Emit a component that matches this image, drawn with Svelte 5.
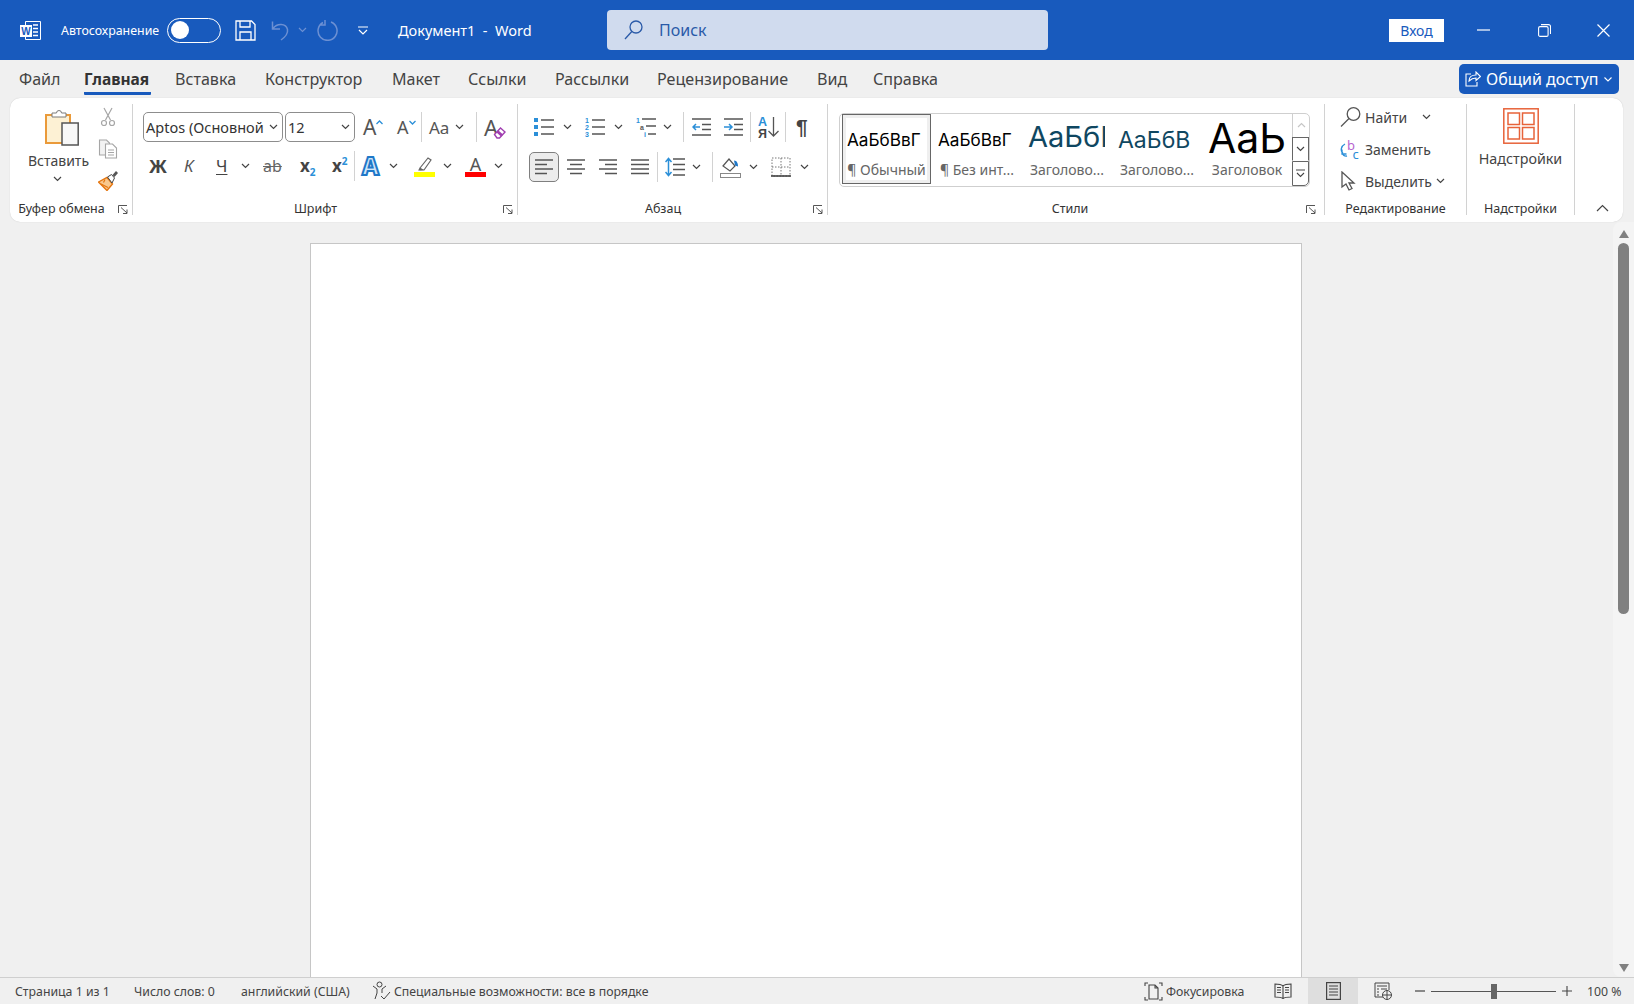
<script>
	const tabs = ['Файл', 'Главная', 'Вставка', 'Конструктор', 'Макет', 'Ссылки', 'Рассылки', 'Рецензирование', 'Вид', 'Справка'];

	const styles = [
		{ sample: 'АаБбВвГ', name: '¶ Обычный', cls: 'normal', selected: true },
		{ sample: 'АаБбВвГ', name: '¶ Без инт...', cls: 'normal' },
		{ sample: 'АаБбВ', name: 'Заголово...', cls: 'h1' },
		{ sample: 'АаБбВ', name: 'Заголово...', cls: 'h2' },
		{ sample: 'АаЬ', name: 'Заголовок', cls: 'title' }
	];
</script>

{#snippet chev()}
	<svg class="chev" width="9" height="6" viewBox="0 0 9 6"><path d="M1 1l3.5 3.5L8 1" fill="none" stroke="#444" stroke-width="1.2" /></svg>
{/snippet}

{#snippet launcher()}
	<svg class="launcher" width="10" height="9" viewBox="0 0 10 9"><path d="M.5 8V.5H9M3 2.5L9 8M9 4.5V8.5H5" fill="none" stroke="#555" /></svg>
{/snippet}

{#snippet sep()}
	<i class="sep"></i>
{/snippet}

<div class="word">
	<header class="titlebar">
		<svg width="21" height="21" viewBox="0 0 21 21">
			<path d="M5.5 1.500h15v18h-15z" fill="none" stroke="#fff" />
			<path d="M13 5h5M13 8.500h5M13 12h5M13 15.500h5" stroke="#fff" stroke-width="1.300" />
			<rect y="5" width="12" height="12" fill="#fff" />
			<text x="6" y="14.500" class="wmark">W</text>
		</svg>
		<span class="autosave">Автосохранение</span>
		<span class="toggle"><i></i></span>
		<svg width="21" height="21" viewBox="0 0 21 21" fill="none" stroke="#fff" stroke-width="1.300">
			<path d="M1 1h15.500L20 4.500V20H1z" /><path d="M5 1v6h10V1M5 20v-8h11v8" />
		</svg>
		<svg width="20" height="21" viewBox="0 0 20 21" fill="none" stroke="#6c90d3" stroke-width="1.500">
			<path d="M1.500 1.500V9H9M2 8.500C6 3 15 3 16.500 9.500c.8 4.500-3 8-6.500 10.500" />
		</svg>
		<svg width="9" height="6" viewBox="0 0 9 6"><path d="M1 1l3.500 3.500L8 1" fill="none" stroke="#6c90d3" stroke-width="1.200" /></svg>
		<svg width="22" height="22" viewBox="0 0 22 22" fill="none" stroke="#6c90d3" stroke-width="1.500">
			<path d="M6 3.500a9.500 9.500 0 1 0 8-.5M8 1v5H2.500" />
		</svg>
		<svg width="10" height="9" viewBox="0 0 10 9" fill="none" stroke="#fff" stroke-width="1.200"><path d="M0 1h10M1 4l4 4 4-4" /></svg>
		<span class="doc-title">Документ1&nbsp; - &nbsp;Word</span>
		<div class="search">
			<svg width="19" height="20" viewBox="0 0 19 20" fill="none" stroke="#2a5aa8" stroke-width="1.300">
				<circle cx="12" cy="7" r="6" /><path d="M7.800 11.500L1 19" />
			</svg>
			<span>Поиск</span>
		</div>
		<button class="login">Вход</button>
		<svg width="13" height="2" viewBox="0 0 13 2"><path d="M0 1h13" stroke="#fff" stroke-width="1.200" /></svg>
		<svg width="13" height="13" viewBox="0 0 13 13" fill="none" stroke="#fff" stroke-width="1.100">
			<rect x=".6" y="2.600" width="9.500" height="9.800" rx="1.500" /><path d="M3 .6h7.500a2 2 0 0 1 2 2V10" />
		</svg>
		<svg width="13" height="13" viewBox="0 0 13 13"><path d="M.5.5l12 12M12.500.5l-12 12" stroke="#fff" stroke-width="1.200" /></svg>
	</header>

	<nav class="tabs">
		<div class="tab-list">
			{#each tabs as tab, i}
				<span class="tab" class:active={i === 1}>{tab}</span>
			{/each}
		</div>
		<button class="share">
			<svg width="16" height="16" viewBox="0 0 16 16" fill="none" stroke="#fff" stroke-width="1.100">
				<path d="M6 3H1v12h11v-4M4 10c0-4 3-6 7-6V1l4.500 4.500L11 9.500V7c-3 0-5 1-7 3z" />
			</svg>
			<span>Общий доступ</span>
			<svg width="8" height="5" viewBox="0 0 8 5"><path d="M.5.500L4 4 7.500.5" fill="none" stroke="#fff" stroke-width="1.100" /></svg>
		</button>
	</nav>

	<section class="ribbon">
		<div class="group clipboard">
			<div class="body">
				<div class="paste">
					<svg width="34" height="38" viewBox="0 0 34 38">
						<rect x="1" y="7" width="24" height="28" fill="#fdf1d4" stroke="#ea9a3a" stroke-width="2" />
						<path d="M7 9V5h4.500a2.500 2.500 0 0 1 5 0H21v4z" fill="#fff" stroke="#7b7b7b" />
						<rect x="17" y="15" width="16.200" height="22" fill="#f8f8f8" stroke="#555" stroke-width="1.500" />
					</svg>
					<span>Вставить</span>
					{@render chev()}
				</div>
				<div class="clip-tools">
					<svg width="20" height="20" viewBox="0 0 20 20" fill="none" stroke="#a6a6a6" stroke-width="1.200">
						<path d="M6 1l6.500 12M14 1L7.500 13" /><circle cx="6" cy="16" r="2.500" /><circle cx="14" cy="16" r="2.500" />
					</svg>
					<svg width="20" height="20" viewBox="0 0 20 20" stroke="#a6a6a6" stroke-width="1.100">
						<path d="M1.500 1h7l3 3v12h-10z" fill="#f2f2f2" /><path d="M7.500 5h7l4 4v10h-11z" fill="#fff" /><path d="M10 11h6M10 13.500h6M10 16h6" />
					</svg>
					<svg width="20" height="20" viewBox="0 0 20 20">
						<path d="M.5 11L9 6.500l5.500 6.500L9 19.500z" fill="#f8c88e" stroke="#e5750f" stroke-width="1.400" />
						<path d="M3 13l7 3.500M7 8.500l-1.500 3" stroke="#e5750f" stroke-width="1.200" />
						<path d="M9.500 6l4-2.500 3 3.500-2.500 5z" fill="#fff" stroke="#444" />
						<path d="M14.500 4l3.500-4 2 2-3.500 4z" fill="#555" />
					</svg>
				</div>
			</div>
			<div class="label"><span>Буфер обмена</span>{@render launcher()}</div>
		</div>

		<div class="group font">
			<div class="body">
				<div class="row font-a">
					<div class="combo name"><span>Aptos (Основной</span>{@render chev()}</div>
					<div class="combo size"><span>12</span>{@render chev()}</div>
					<div class="big-a">A<svg width="7" height="5" viewBox="0 0 7 5"><path d="M.5 4L3.500 1l3 3" fill="none" stroke="#2b8fd8" stroke-width="1.300" /></svg></div>
					<div class="big-a small">A<svg width="7" height="5" viewBox="0 0 7 5"><path d="M.5 1l3 3 3-3" fill="none" stroke="#2b8fd8" stroke-width="1.300" /></svg></div>
					{@render sep()}
					<div class="aa"><span>Aa</span>{@render chev()}</div>
					{@render sep()}
					<div class="clear">
						<span>A</span>
						<svg width="13" height="13" viewBox="0 0 13 13">
							<path d="M1.500 8.500l6-6.500 4.500 4-5.500 6H4z" fill="#fff" stroke="#a03fb0" stroke-width="1.400" />
							<path d="M4.500 5.500l4.500 4" stroke="#a03fb0" stroke-width="3" />
						</svg>
					</div>
				</div>
				<div class="row font-b">
					<b class="fmt bold">Ж</b>
					<i class="fmt italic">К</i>
					<span class="fmt under">Ч</span>
					{@render chev()}
					<span class="fmt strike">ab</span>
					<b class="fmt script">x<sub>2</sub></b>
					<b class="fmt script">x<sup>2</sup></b>
					{@render sep()}
					<span class="effect">A</span>
					{@render chev()}
					<svg width="21" height="22" viewBox="0 0 21 22">
						<path d="M6 13l8-10 3 2-7 10H6z" fill="#fff" stroke="#666" stroke-width="1.200" />
						<path d="M4 15.500l2-3 4 2.500z" fill="#666" />
						<rect y="17" width="21" height="5" fill="#ffff00" />
					</svg>
					{@render chev()}
					<span class="color-a">A</span>
					{@render chev()}
				</div>
			</div>
			<div class="label"><span>Шрифт</span>{@render launcher()}</div>
		</div>

		<div class="group para">
			<div class="body">
				<div class="row para-a">
					<svg width="20" height="20" viewBox="0 0 20 20">
						<path d="M0 1h4v4H0zM0 8h4v4H0zM0 15h4v4H0z" fill="#2b8fd8" />
						<path d="M7 3h13M7 10h13M7 17h13" stroke="#555" stroke-width="1.300" />
					</svg>
					{@render chev()}
					<svg width="20" height="20" viewBox="0 0 20 20">
						<text x="0" y="6" class="mini">1</text><text x="0" y="13" class="mini">2</text><text x="0" y="20" class="mini">3</text>
						<path d="M7 3h13M7 10h13M7 17h13" stroke="#555" stroke-width="1.300" />
					</svg>
					{@render chev()}
					<svg width="20" height="20" viewBox="0 0 20 20">
						<text x="0" y="6" class="mini">1</text><text x="4" y="13" class="mini dark">a</text><text x="8" y="20" class="mini">i</text>
						<path d="M6 2h14M10 9h10M12 17h8" stroke="#555" stroke-width="1.300" />
					</svg>
					{@render chev()}
					{@render sep()}
					<svg width="19" height="20" viewBox="0 0 19 20">
						<path d="M0 2h19M0 18h19M10 7.500h9M10 12.500h9" stroke="#555" stroke-width="1.300" />
						<path d="M8 10H1M4 7l-3 3 3 3" fill="none" stroke="#2b8fd8" stroke-width="1.500" />
					</svg>
					<svg width="19" height="20" viewBox="0 0 19 20">
						<path d="M0 2h19M0 18h19M10 7.500h9M10 12.500h9" stroke="#555" stroke-width="1.300" />
						<path d="M0 10h7M5 7l3 3-3 3" fill="none" stroke="#2b8fd8" stroke-width="1.500" />
					</svg>
					{@render sep()}
					<svg width="21" height="24" viewBox="0 0 21 24">
						<text x="0" y="11" class="sort blue">A</text>
						<text x="0" y="22.500" class="sort">Я</text>
						<path d="M15.500 2v19M10.500 16l5 5 5-5" fill="none" stroke="#555" stroke-width="1.300" />
					</svg>
					{@render sep()}
					<span class="pilcrow">¶</span>
				</div>
				<div class="row para-b">
					<div class="align-on">
						<svg width="18" height="16" viewBox="0 0 18 16"><path d="M0 1h18M0 5.500h12M0 10h18M0 14.500h12" stroke="#555" stroke-width="1.300" /></svg>
					</div>
					<svg width="18" height="16" viewBox="0 0 18 16"><path d="M0 1h18M3 5.500h12M0 10h18M3 14.500h12" stroke="#555" stroke-width="1.300" /></svg>
					<svg width="18" height="16" viewBox="0 0 18 16"><path d="M0 1h18M6 5.500h12M0 10h18M6 14.500h12" stroke="#555" stroke-width="1.300" /></svg>
					<svg width="18" height="16" viewBox="0 0 18 16"><path d="M0 1h18M0 5.500h18M0 10h18M0 14.500h18" stroke="#555" stroke-width="1.300" /></svg>
					{@render sep()}
					<svg width="20" height="20" viewBox="0 0 20 20">
						<path d="M8 2h12M8 7.500h12M8 12.500h12M8 18h12" stroke="#555" stroke-width="1.300" />
						<path d="M3.500 2v16M.5 5l3-3.500L6.500 5M.5 15l3 3.500L6.500 15" fill="none" stroke="#2b8fd8" stroke-width="1.500" />
					</svg>
					{@render chev()}
					{@render sep()}
					<svg width="21" height="21" viewBox="0 0 21 21">
						<path d="M3 9l6-7 6 7-5 5z" fill="#fff" stroke="#555" stroke-width="1.200" />
						<path d="M14 3.500c3 0 4 3 4 6l-3-1z" fill="#1f78c8" />
						<rect x=".5" y="16.500" width="20" height="4" fill="#fff" stroke="#888" />
					</svg>
					{@render chev()}
					<svg width="20" height="20" viewBox="0 0 20 20">
						<path d="M1 1h18v18H1zM10 1v18M1 10h18" fill="none" stroke="#777" stroke-dasharray="1.500 1.500" />
						<path d="M0 19h20" stroke="#444" stroke-width="1.600" />
					</svg>
					{@render chev()}
				</div>
			</div>
			<div class="label"><span>Абзац</span>{@render launcher()}</div>
		</div>

		<div class="group styles">
			<div class="body">
				<div class="gallery">
					{#each styles as s}
						<div class="style" class:selected={s.selected}>
							<div class="sample {s.cls}">{s.sample}</div>
							<div class="style-name">{s.name}</div>
						</div>
					{/each}
					<div class="scroller">
						<div class="up"><svg width="9" height="6" viewBox="0 0 9 6"><path d="M1 5l3.500-3.500L8 5" fill="none" stroke="#c6c6c6" stroke-width="1.200" /></svg></div>
						<div class="mid">{@render chev()}</div>
						<div class="more">
							<svg width="9" height="9" viewBox="0 0 9 9" fill="none" stroke="#444" stroke-width="1.100"><path d="M0 1h9M1 4l3.500 3.500L8 4" /></svg>
						</div>
					</div>
				</div>
			</div>
			<div class="label"><span>Стили</span>{@render launcher()}</div>
		</div>

		<div class="group edit">
			<div class="body">
				<div class="edit-row">
					<svg width="21" height="20" viewBox="0 0 21 20" fill="none" stroke="#555" stroke-width="1.300">
						<circle cx="13.500" cy="7" r="6.300" /><path d="M9 11.500L1 19.500" />
					</svg>
					<span class="find">Найти</span>
					{@render chev()}
				</div>
				<div class="edit-row">
					<svg width="21" height="21" viewBox="0 0 21 21">
						<text x="7" y="10.500" class="repl b">b</text>
						<text x="12.500" y="20" class="repl c">c</text>
						<path d="M5 5C1 7 0 12 3 14M7 17c-2 .5-4-1-5-3M2 10.500V15h4.500" fill="none" stroke="#2b8fd8" stroke-width="1.300" />
					</svg>
					<span>Заменить</span>
				</div>
				<div class="edit-row">
					<svg width="21" height="20" viewBox="0 0 21 20">
						<path d="M2 1v15l4-3 3 6 3-1.500-3-5.500h5z" fill="#fff" stroke="#555" stroke-width="1.300" />
					</svg>
					<span class="select">Выделить</span>
					{@render chev()}
				</div>
			</div>
			<div class="label"><span>Редактирование</span></div>
		</div>

		<div class="group addins">
			<div class="body">
				<svg width="36" height="36" viewBox="0 0 36 36" fill="none" stroke="#e7633a" stroke-width="1.500">
					<rect x=".8" y=".8" width="34.400" height="34.400" />
					<rect x="5" y="5" width="11.500" height="11.500" /><rect x="19.500" y="5" width="11.500" height="11.500" />
					<rect x="5" y="19.500" width="11.500" height="11.500" /><rect x="19.500" y="19.500" width="11.500" height="11.500" />
				</svg>
				<span>Надстройки</span>
			</div>
			<div class="label"><span>Надстройки</span></div>
		</div>

		<div class="group collapse">
			<svg width="13" height="8" viewBox="0 0 13 8"><path d="M1 7l5.500-5.500L12 7" fill="none" stroke="#444" stroke-width="1.200" /></svg>
		</div>
	</section>

	<main class="workspace">
		<div class="canvas"><div class="page"></div></div>
		<div class="scrollbar">
			<i class="arrow up"></i>
			<div class="thumb"></div>
			<i class="arrow down"></i>
		</div>
	</main>

	<footer class="status">
		<span>Страница 1 из 1</span>
		<span>Число слов: 0</span>
		<span>английский (США)</span>
		<span class="with-icon">
			<svg width="19" height="20" viewBox="0 0 19 20" fill="none" stroke="#444" stroke-width="1">
				<circle cx="7.500" cy="3.500" r="2.500" /><path d="M1 5l4 3v4l-2 6M14 5l-4 3v4M9 15l3 3 6-7" />
			</svg>
			Специальные возможности: все в порядке
		</span>
		<span class="with-icon">
			<svg width="19" height="19" viewBox="0 0 19 19" fill="none" stroke="#444" stroke-width="1.100">
				<path d="M1 4V1h3M15 1h3v3M1 15v3h3M15 18h3v-3" /><path d="M5 3h6l3 3v11H5zM11 3v3h3" />
			</svg>
			Фокусировка
		</span>
		<svg width="18" height="16" viewBox="0 0 18 16" fill="none" stroke="#444" stroke-width="1.100">
			<path d="M9 3C7 1 4 1 1 1v13c3 0 6 0 8 1.500 2-1.500 5-1.500 8-1.500V1c-3 0-6 0-8 2zM9 3v12.500M3 4.500h4M3 7h4M3 9.500h4M11 4.500h4M11 7h4M11 9.500h4" />
		</svg>
		<div class="view-on">
			<svg width="15" height="18" viewBox="0 0 15 18" fill="none" stroke="#444" stroke-width="1.200">
				<rect x=".6" y=".6" width="13.800" height="16.800" /><path d="M3 4h9M3 7h9M3 10h9M3 13h9" />
			</svg>
		</div>
		<svg width="18" height="18" viewBox="0 0 18 18" fill="none" stroke="#444" stroke-width="1">
			<path d="M9 15H1V1h14v7M3 4h10M3 7h2M7 7h6M3 10h2M3 13h2" />
			<circle cx="13" cy="13" r="4.500" fill="#f0f0f0" /><path d="M8.500 13h9M13 8.500v9" />
		</svg>
		<svg width="10" height="2" viewBox="0 0 10 2"><path d="M0 1h10" stroke="#444" stroke-width="1.200" /></svg>
		<div class="slider"><i></i></div>
		<svg width="10" height="10" viewBox="0 0 10 10"><path d="M0 5h10M5 0v10" stroke="#444" stroke-width="1.100" /></svg>
		<span>100 %</span>
	</footer>
</div>

<style>
	:global(body) {
		margin: 0;
		background: #f0f0f0;
	}

	.word {
		width: 1634px;
		height: 1004px;
		display: flex;
		flex-direction: column;
		overflow: hidden;
		font-family: "Noto Sans", sans-serif;
		color: #444;
		background: #f0f0f0;
	}

	.titlebar {
		flex: 0 0 60px;
		display: grid;
		grid-template-columns: 41px 106px 68px 36px 27px 19px 41px 40px 209px 782px 88px 61px 59px auto;
		align-items: center;
		padding-left: 20px;
		background: #185abd;
		color: #fff;
	}

	.wmark {
		font: 700 10px "Liberation Sans", sans-serif;
		fill: #185abd;
		text-anchor: middle;
	}

	.autosave {
		font-size: 12.400px;
	}

	.toggle {
		width: 54px;
		height: 25px;
		box-sizing: border-box;
		border: 1.5px solid #fff;
		border-radius: 13px;
		display: flex;
		align-items: center;
		padding-left: 3px;
	}

	.toggle i {
		width: 18px;
		height: 18px;
		border-radius: 50%;
		background: #fff;
	}

	.doc-title {
		font-size: 14.500px;
	}

	.search {
		width: 441px;
		height: 40px;
		display: flex;
		align-items: center;
		gap: 16px;
		padding-left: 17px;
		box-sizing: border-box;
		border-radius: 4px;
		background: #d0dbee;
		color: #2a5aa8;
		font-size: 16px;
	}

	.login {
		width: 55px;
		height: 23px;
		padding: 0;
		border: none;
		background: #fff;
		color: #185abd;
		font: 14px "Noto Sans", sans-serif;
	}

	.tabs {
		flex: 0 0 38px;
		display: flex;
		justify-content: space-between;
	}

	.tab-list {
		display: grid;
		grid-template-columns: 65px 91px 90px 127px 76px 87px 102px 160px 56px auto;
		padding-left: 19px;
		font-size: 16.100px;
		line-height: 39px;
		color: #444;
	}

	.tab {
		height: 35px;
		white-space: nowrap;
	}

	.tab.active {
		font-size: 15.500px;
		font-weight: 700;
		color: #333;
		width: 67px;
		border-bottom: 3px solid #185abd;
		box-sizing: content-box;
		height: 32px;
		border-radius: 0 0 1px 1px;
	}

	.share {
		width: 160px;
		height: 30px;
		margin: 4px 15px 0 0;
		padding: 0 0 0 6px;
		display: flex;
		align-items: center;
		gap: 5px;
		border: none;
		border-radius: 5px;
		background: #185abd;
		color: #fff;
		font: 16px "Noto Sans", sans-serif;
	}

	.ribbon {
		flex: 0 0 124px;
		margin: 0 11px 0 10px;
		box-sizing: border-box;
		display: flex;
		border-radius: 10px;
		background: #fff;
		box-shadow: 0 0 1px #bdbdbd;
	}

	.group {
		margin-top: 6px;
		height: 111px;
		box-sizing: border-box;
		display: flex;
		flex-direction: column;
		border-right: 1px solid #d2d2d2;
		flex: none;
	}

	.body {
		flex: 1;
		min-height: 0;
	}

	.label {
		flex: 0 0 22px;
		box-sizing: border-box;
		padding: 10px 4px 0 0;
		display: flex;
		align-items: center;
		font-size: 12.500px;
		line-height: 12px;
		color: #333;
	}

	.label span {
		flex: 1;
		text-align: center;
		padding-right: 5px;
	}

	.launcher {
		flex: none;
	}

	.sep {
		display: block;
		width: 1px;
		height: 30px;
		background: #d2d2d2;
	}

	.row {
		display: grid;
		align-items: center;
		justify-items: start;
		height: 30px;
	}

	.clipboard {
		width: 123px;
	}

	.clipboard .body {
		display: flex;
	}

	.paste {
		width: 82px;
		padding-left: 15px;
		box-sizing: border-box;
		display: flex;
		flex-direction: column;
		align-items: center;
		padding-top: 4px;
		font-size: 14px;
	}

	.paste svg:first-child {
		margin-left: 6px;
	}

	.paste span {
		margin-top: 5px;
		line-height: 20px;
	}

	.paste .chev {
		margin: 5px 0 0 -2px;
	}

	.clip-tools {
		display: flex;
		flex-direction: column;
		gap: 12px;
		padding: 3px 0 0 6px;
	}

	.font {
		width: 385px;
		padding-top: 8px;
	}

	.font-a {
		grid-template-columns: 142px 78px 34px 24px 8px 47px 8px auto;
		padding-left: 10px;
	}

	.font-b {
		grid-template-columns: 35px 32px 25px 22px 37px 32px 22px 8px 27px 25px 29px 22px 29px auto;
		padding-left: 16px;
		margin-top: 9px;
	}

	.combo {
		height: 30px;
		box-sizing: border-box;
		display: flex;
		align-items: center;
		justify-content: space-between;
		padding: 0 4px 0 2px;
		border: 1px solid #8d8d8d;
		border-radius: 5px;
		font-size: 14.500px;
		color: #333;
		white-space: nowrap;
	}

	.combo.name {
		width: 140px;
	}

	.combo.size {
		width: 70px;
	}

	.big-a {
		display: flex;
		align-items: flex-start;
		font: 21px/26px "Noto Sans", sans-serif;
		color: #555;
	}

	.big-a svg {
		margin-top: 6px;
	}

	.big-a.small {
		font-size: 18px;
	}

	.aa {
		display: flex;
		align-items: center;
		gap: 6px;
		font-size: 17px;
		color: #555;
	}

	.clear {
		display: flex;
		align-items: flex-end;
		font-size: 22px;
		line-height: 26px;
		color: #555;
	}

	.clear svg {
		margin: 0 0 1px -5px;
	}

	.fmt {
		font-size: 18px;
		line-height: 22px;
		color: #444;
	}

	.italic {
		font-size: 17px;
		font-style: italic;
		color: #555;
	}

	.under {
		font-size: 17px;
		text-decoration: underline;
		text-underline-offset: 2px;
	}

	.strike {
		font-size: 16px;
		color: #666;
		text-decoration: line-through;
	}

	.script {
		font-size: 17px;
	}

	.script sub,
	.script sup {
		font-size: 10px;
		line-height: 0;
		color: #2b8fd8;
	}

	.effect {
		font-size: 24px;
		font-weight: 800;
		line-height: 26px;
		color: #cfe6f8;
		-webkit-text-stroke: 2px #1f78c8;
	}

	.color-a {
		width: 21px;
		height: 22px;
		box-sizing: border-box;
		border-bottom: 5px solid #f00;
		text-align: center;
		font-size: 18px;
		line-height: 19px;
		color: #555;
	}

	.para {
		width: 310px;
		padding-top: 8px;
	}

	.para-a {
		grid-template-columns: 29px 22px 29px 22px 27px 20px 9px 32px 26px 8px 27px 11px auto;
		padding-left: 16px;
	}

	.para-b {
		grid-template-columns: 38px 32px 32px 26px 8px 27px 20px 8px 29px 22px 29px auto;
		padding-left: 11px;
		margin-top: 10px;
	}

	.mini {
		font: 700 7px "Liberation Sans", sans-serif;
		fill: #2b8fd8;
	}

	.mini.dark {
		fill: #555;
	}

	.sort {
		font: 700 12.500px "Liberation Sans", sans-serif;
		fill: #444;
	}

	.sort.blue {
		fill: #2b8fd8;
	}

	.pilcrow {
		font: 700 21px/24px "Liberation Sans", sans-serif;
		color: #444;
	}

	.align-on {
		width: 30px;
		height: 30px;
		box-sizing: border-box;
		display: flex;
		align-items: center;
		justify-content: center;
		border: 1px solid #7f7f7f;
		border-radius: 5px;
		background: #ececec;
	}

	.styles {
		width: 497px;
		padding: 9px 4px 0 11px;
	}

	.gallery {
		width: 471px;
		height: 74px;
		box-sizing: border-box;
		display: flex;
		border: 1px solid #cfcfcf;
		border-radius: 5px;
		padding-left: 2px;
	}

	.style {
		width: 90px;
		height: 70px;
		box-sizing: border-box;
		padding: 2px 4px;
		border: 2px solid transparent;
		overflow: hidden;
		flex: none;
	}

	.style.selected {
		width: 89px;
		margin-right: 1px;
		border: 1px solid #666;
		padding: 3px 4px;
		outline: 3px solid #efefef;
		outline-offset: -4px;
	}

	.sample {
		height: 44px;
		display: flex;
		align-items: flex-end;
		overflow: hidden;
		white-space: nowrap;
		color: #000;
		font-family: Inter, "Liberation Sans", sans-serif;
	}

	.sample.normal {
		font-size: 17.200px;
		line-height: 20px;
		padding-bottom: 12px;
		height: 32px;
	}

	.sample.h1 {
		font-size: 29px;
		line-height: 32px;
		color: #0f4761;
		padding-bottom: 9px;
		height: 35px;
		width: 77px;
	}

	.sample.h2 {
		font-size: 23px;
		line-height: 26px;
		color: #0f4761;
		padding-bottom: 9px;
		height: 35px;
	}

	.sample.title {
		font-size: 41px;
		line-height: 40px;
		padding-bottom: 8px;
		height: 36px;
		align-items: flex-start;
	}

	.style-name {
		font-size: 14px;
		line-height: 16px;
		color: #666;
		white-space: nowrap;
		text-align: center;
	}

	.scroller {
		width: 18px;
		margin-left: auto;
		display: flex;
		flex-direction: column;
	}

	.scroller div {
		flex: 1;
		display: flex;
		align-items: center;
		justify-content: center;
		border-left: 1px solid #666;
	}

	.scroller .up {
		border-left-color: #cfcfcf;
	}

	.scroller .mid {
		border-top: 1px solid #666;
		border-right: 1px solid #666;
		border-bottom: 1px solid transparent;
	}

	.scroller .more {
		border-top: 1px solid #666;
		border-bottom: 1px solid #666;
		border-right: 1px solid #666;
		border-radius: 0 0 5px 0;
	}

	.edit {
		width: 142px;
		padding-left: 15px;
		font-size: 14px;
		color: #444;
	}

	.edit .body {
		margin-top: -1px;
	}

	.edit-row {
		height: 28px;
		margin-bottom: 4px;
		display: flex;
		align-items: center;
		gap: 4px;
	}

	.find {
		margin-right: 11px;
	}

	.select {
		margin-right: 0;
	}

	.repl {
		font: 13px "Noto Sans", sans-serif;
	}

	.repl.b {
		fill: #b665cf;
	}

	.repl.c {
		fill: #2b8fd8;
	}

	.edit .label {
		margin-left: -15px;
		padding-right: 0;
	}

	.edit .label span,
	.addins .label span {
		padding-right: 0;
	}

	.addins {
		width: 108px;
	}

	.addins .label {
		padding-right: 0;
	}

	.addins .body {
		display: flex;
		flex-direction: column;
		align-items: center;
		padding-top: 4px;
		font-size: 14.300px;
	}

	.addins .body span {
		line-height: 20px;
		margin-top: 5px;
	}

	.collapse {
		flex: 1;
		border: none;
		align-items: center;
		justify-content: flex-end;
		padding: 0 0 3px 7px;
	}

	.workspace {
		flex: 1;
		min-height: 0;
		display: flex;
	}

	.canvas {
		flex: 1;
		padding: 21px 0 0 310px;
		overflow: hidden;
	}

	.page {
		width: 990px;
		height: 1100px;
		background: #fff;
		border: 1px solid #c6c6c6;
	}

	.scrollbar {
		width: 21px;
		display: flex;
		flex-direction: column;
		align-items: center;
		background: #f4f4f4;
		border-radius: 8px 0 0 8px;
		padding: 8px 0 5px;
		box-sizing: border-box;
	}

	.thumb {
		width: 11px;
		height: 371px;
		margin-top: 5px;
		border-radius: 6px;
		background: #808080;
	}

	.arrow {
		width: 0;
		height: 0;
		border-left: 5.500px solid transparent;
		border-right: 5.500px solid transparent;
	}

	.arrow.up {
		border-bottom: 8px solid #808080;
	}

	.arrow.down {
		margin-top: auto;
		border-top: 8px solid #808080;
	}

	.status {
		flex: 0 0 27px;
		box-sizing: border-box;
		display: grid;
		grid-template-columns: 119px 107px 131px 772px 130px 34px 66px 41px 16px 131px 25px auto;
		align-items: center;
		padding-left: 15px;
		border-top: 1px solid #cfcfcf;
		background: #f0f0f0;
		font-size: 12.300px;
		color: #444;
		white-space: nowrap;
	}

	.with-icon {
		display: flex;
		align-items: center;
		gap: 3px;
	}

	.view-on {
		width: 50px;
		height: 26px;
		display: flex;
		align-items: center;
		justify-content: center;
		background: #dedede;
	}

	.slider {
		width: 125px;
		height: 16px;
		display: flex;
		align-items: center;
		justify-content: center;
		background: linear-gradient(#555, #555) center / 100% 1px no-repeat;
	}

	.slider i {
		width: 6px;
		height: 15px;
		background: #666;
	}
</style>
